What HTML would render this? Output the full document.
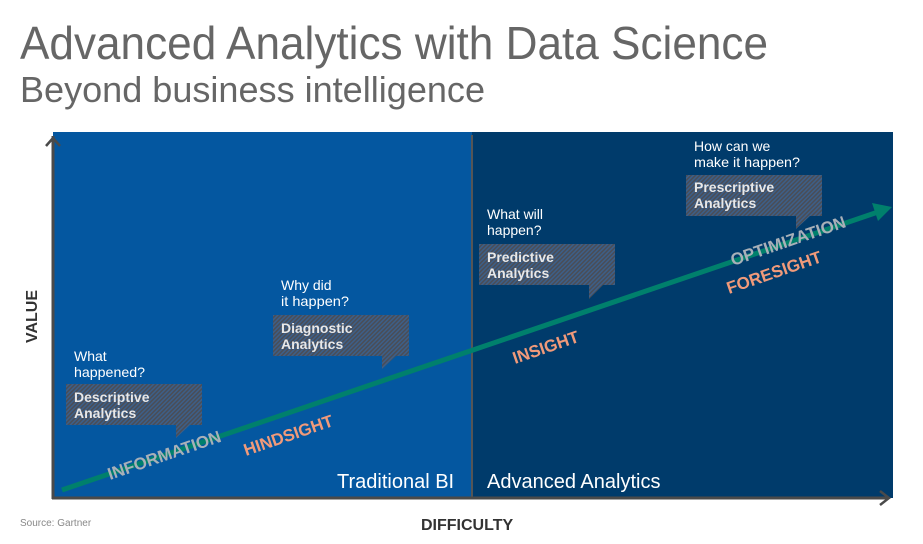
<!DOCTYPE html>
<html><head><meta charset="utf-8"><style>
html,body{margin:0;padding:0;background:#fff;width:923px;height:544px;overflow:hidden}
svg{display:block;font-family:"Liberation Sans",sans-serif}
</style></head><body>
<svg width="923" height="544" viewBox="0 0 923 544" xmlns="http://www.w3.org/2000/svg">
<defs>
<pattern id="h" width="3" height="3" patternUnits="userSpaceOnUse" patternTransform="rotate(45)">
<rect width="3" height="3" fill="#3d5f88"/><rect width="1.5" height="3" fill="#4a4d56"/>
</pattern>
</defs>
<text x="20" y="59" font-size="46" fill="#666" textLength="748" lengthAdjust="spacingAndGlyphs">Advanced Analytics with Data Science</text>
<text x="20" y="102" font-size="36" fill="#666" textLength="465" lengthAdjust="spacingAndGlyphs">Beyond business intelligence</text>
<rect x="53" y="132" width="419" height="366" fill="#0457a0"/>
<rect x="472" y="132" width="421" height="366" fill="#003b6b"/>
<line x1="472" y1="135" x2="472" y2="498" stroke="#555" stroke-width="2"/>
<line x1="53" y1="136" x2="53" y2="499" stroke="#4a4a4a" stroke-width="3"/>
<polyline points="46,146 53,138 60,146" fill="none" stroke="#4a4a4a" stroke-width="2.5"/>
<line x1="52" y1="498" x2="889" y2="498" stroke="#4a4a4a" stroke-width="3"/>
<polyline points="880,491 889,498 880,505" fill="none" stroke="#4a4a4a" stroke-width="2.5"/>
<line x1="62" y1="490" x2="878" y2="212" stroke="#00806c" stroke-width="5"/>
<polygon points="892,207 872,203 878,221" fill="#00806c"/>
<path d="M66,384 H202 V425 H190 L176,438 V425 H66 Z" fill="url(#h)"/>
<path d="M273,315 H409 V356 H396 L382,369 V356 H273 Z" fill="url(#h)"/>
<path d="M479,244 H615 V285 H603 L589,299 V285 H479 Z" fill="url(#h)"/>
<path d="M686,175 H822 V216 H810 L796,229 V216 H686 Z" fill="url(#h)"/>
<g fill="#fff" font-size="14">
<text x="74" y="361">What</text><text x="74" y="377" textLength="71" lengthAdjust="spacingAndGlyphs">happened?</text>
<text x="281" y="290">Why did</text><text x="281" y="306" textLength="68" lengthAdjust="spacingAndGlyphs">it happen?</text>
<text x="487" y="219">What will</text><text x="487" y="235">happen?</text>
<text x="694" y="151">How can we</text><text x="694" y="167" textLength="106" lengthAdjust="spacingAndGlyphs">make it happen?</text>
</g>
<g fill="#e8e8e8" font-size="14" font-weight="bold">
<text x="74" y="402">Descriptive</text><text x="74" y="418">Analytics</text>
<text x="281" y="333">Diagnostic</text><text x="281" y="349">Analytics</text>
<text x="487" y="262">Predictive</text><text x="487" y="278">Analytics</text>
<text x="694" y="192">Prescriptive</text><text x="694" y="208">Analytics</text>
</g>
<g font-size="17" font-weight="bold">
<text transform="translate(110,480) rotate(-19)" fill="#a8b0b8">INFORMATION</text>
<text transform="translate(246,456) rotate(-19)" fill="#f09a7a">HINDSIGHT</text>
<text transform="translate(515,364) rotate(-19)" fill="#f09a7a">INSIGHT</text>
<text transform="translate(733,266) rotate(-19)" fill="#a8b0b8">OPTIMIZATION</text>
<text transform="translate(729,294) rotate(-19)" fill="#f09a7a">FORESIGHT</text>
</g>
<text x="337" y="488" font-size="20" fill="#fff">Traditional BI</text>
<text x="487" y="488" font-size="20" fill="#fff">Advanced Analytics</text>
<text x="421" y="530" font-size="16" font-weight="bold" fill="#333">DIFFICULTY</text>
<text transform="translate(37,343) rotate(-90)" font-size="16" font-weight="bold" fill="#333">VALUE</text>
<text x="20" y="526" font-size="10" fill="#888">Source: Gartner</text>
</svg>
</body></html>
